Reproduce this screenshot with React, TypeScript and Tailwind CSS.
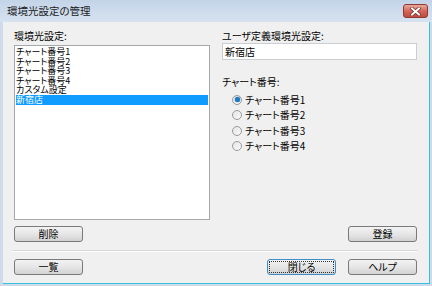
import React from 'react';

const font = "font-['Noto_Sans_CJK_JP','Noto_Sans',sans-serif] [font-feature-settings:'palt']";

function Btn({ label, focused = false }: { label: string; focused?: boolean }) {
  return (
    <button
      className={`w-[69px] h-[16px] rounded-[3px] border p-[1px] bg-gradient-to-b from-[#f3f3f3] via-[#e6e6e6] to-[#d2d2d2] text-[10px] leading-none text-black ${
        focused ? 'border-[#3c8dc8]' : 'border-[#7a7a7a]'
      }`}
    >
      <span
        className={`flex h-full w-full items-center justify-center ${
          focused ? 'border border-dotted border-[#333]' : ''
        }`}
      >
        {label}
      </span>
    </button>
  );
}

function Radio({ label, checked = false }: { label: string; checked?: boolean }) {
  return (
    <div className="flex h-[15.5px] items-center pl-[10px] gap-[3px]">
      <span className="flex h-[10px] w-[10px] items-center justify-center rounded-full border border-[#9a9a9a] bg-gradient-to-br from-[#e4e4e4] to-[#fafafa]">
        {checked && <span className="h-[5px] w-[5px] rounded-full bg-[#1a7fc8] shadow-[0_0_1px_#0b4f8a]" />}
      </span>
      <span className="text-[10px] leading-none">{label}</span>
    </div>
  );
}

export default function App() {
  const items = ['チャート番号1', 'チャート番号2', 'チャート番号3', 'チャート番号4', 'カスタム設定', '新宿店'];

  return (
    <div className={`w-[432px] h-[286px] bg-[#cedbeb] flex flex-col text-black ${font}`}>
      {/* title bar */}
      <div className="h-[22px] flex items-start pl-[7px] pr-[4px] bg-gradient-to-b from-[#c4d4e8] to-[#d6e2f0]">
        <span className="mt-[5px] text-[10.5px] leading-[12px] text-[#1b1b1b]">環境光設定の管理</span>
        <div className="ml-auto mt-[4px] w-[25px] h-[14px] rounded-[3px] border border-[#8c3a33] bg-gradient-to-b from-[#e9a99c] via-[#d4655a] to-[#c24a3e] flex items-center justify-center">
          <svg width="11" height="9" viewBox="0 0 11 9">
            <path d="M2 1.5 L9 7.5 M9 1.5 L2 7.5" stroke="#6a2a24" strokeWidth="3.4" strokeLinecap="square" />
            <path d="M2 1.5 L9 7.5 M9 1.5 L2 7.5" stroke="#ffffff" strokeWidth="2" strokeLinecap="square" />
          </svg>
        </div>
      </div>

      {/* client area */}
      <div className="flex-1 ml-[3px] mr-[2px] mb-[2px] border-r border-b border-[#35bfe0] bg-[#f0f0f0] flex flex-col">
        <div className="flex gap-[12px] pl-[11px] pt-[8px]">
          <div className="w-[196px] flex flex-col">
            <div className="h-[12px] text-[10px] leading-[12px]">環境光設定:</div>
            <div className="mt-[3px] h-[175px] border border-[#a5a9ae] bg-white pt-[1px] px-[1px]">
              {items.map((t, i) => (
                <div
                  key={t}
                  className={`h-[9.6px] text-[9px] leading-[9.6px] whitespace-nowrap ${
                    i === 5 ? 'bg-[#0f9bff] text-white' : ''
                  }`}
                >
                  {t}
                </div>
              ))}
            </div>
            <div className="mt-[6px] flex">
              <Btn label="削除" />
            </div>
          </div>

          <div className="w-[195px] flex flex-col">
            <div className="h-[12px] text-[10px] leading-[12px]">ユーザ定義環境光設定:</div>
            <div className="mt-[1px] h-[17px] border border-[#c9ced3] bg-white pl-[2px] flex items-center text-[10px] leading-none">
              新宿店
            </div>
            <div className="mt-[16px] h-[12px] text-[10px] leading-[12px]">チャート番号:</div>
            <div className="mt-[4px] flex flex-col">
              <Radio label="チャート番号1" checked />
              <Radio label="チャート番号2" />
              <Radio label="チャート番号3" />
              <Radio label="チャート番号4" />
            </div>
            <div className="flex-1" />
            <div className="flex justify-end">
              <Btn label="登録" />
            </div>
          </div>
        </div>

        <div className="mt-[8px] ml-[9px] w-[406px] border-t border-[#d5d9dd] border-b border-b-white" />

        <div className="mt-[7px] flex pl-[11px] w-[425px] pr-[11px]">
          <Btn label="一覧" />
          <div className="ml-auto flex gap-[12px]">
            <Btn label="閉じる" focused />
            <Btn label="ヘルプ" />
          </div>
        </div>
      </div>
    </div>
  );
}
